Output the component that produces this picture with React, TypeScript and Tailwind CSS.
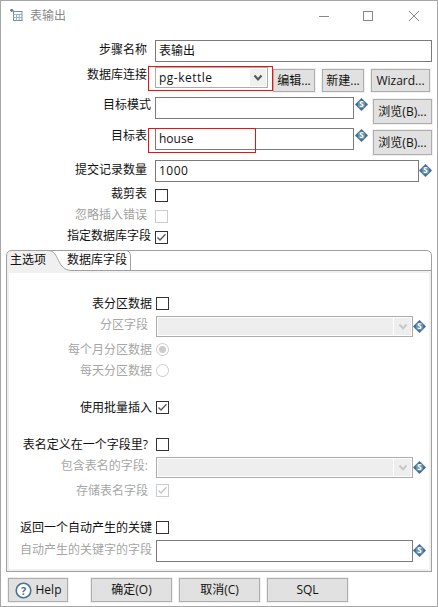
import React from "react";

const FONT = "[font-family:'Open_Sans','Noto_Sans_CJK_SC',sans-serif]";

function VarIcon() {
  return (
    <svg width="13" height="13" viewBox="0 0 13 13" className="shrink-0">
      <path d="M6.5 0.2 L12.8 6.5 L6.5 12.8 L0.2 6.5 Z" fill="#3f6c8e" stroke="#3f6c8e" strokeWidth="0.5" strokeLinejoin="round" />
      <circle cx="6.5" cy="6.5" r="3.7" fill="#6d93ad" />
      <text x="6.5" y="9.2" textAnchor="middle" fontSize="8" fontWeight="700" fill="#fff" fontFamily="'Open Sans',sans-serif">S</text>
    </svg>
  );
}

function Check({ checked, disabled }: { checked?: boolean; disabled?: boolean }) {
  return (
    <div className={`w-[13px] h-[13px] border bg-white shrink-0 flex items-center justify-center ${disabled ? "border-[#cccccc]" : "border-[#333333]"}`}>
      {checked && (
        <svg width="11" height="11" viewBox="0 0 11 11">
          <path d="M1.5 5.5 L4 8 L9.5 2.2" fill="none" stroke={disabled ? "#c4c4c4" : "#555555"} strokeWidth="1.3" />
        </svg>
      )}
    </div>
  );
}

function Radio({ checked }: { checked?: boolean }) {
  return (
    <div className="w-[13px] h-[13px] rounded-full border border-[#cccccc] bg-white flex items-center justify-center shrink-0">
      {checked && <div className="w-[7px] h-[7px] rounded-full bg-[#cccccc]" />}
    </div>
  );
}

function Chevron({ color }: { color: string }) {
  return (
    <svg width="10" height="8" viewBox="0 0 10 8">
      <path d="M1.5 1.5 L5 5.5 L8.5 1.5" fill="none" stroke={color} strokeWidth="2" />
    </svg>
  );
}

function Btn({ children, className }: { children: React.ReactNode; className: string }) {
  return (
    <div className={`border border-[#adadad] bg-[#e1e1e1] text-[12px] text-[#111] flex items-center justify-center shadow-[0_0_0_1px_#f0f0f0] ${className}`}>
      {children}
    </div>
  );
}

function Label({ text, right, h, gray }: { text: string; right: number; h: string; gray?: boolean }) {
  return (
    <div
      className={`${h} flex items-center justify-end pb-[3px] shrink-0 text-[12px] whitespace-nowrap ${gray ? "text-[#a0a0a0]" : "text-[#111]"}`}
      style={{ width: right }}
    >
      {text}
    </div>
  );
}

function TextField({ className, value, spaced }: { className: string; value?: string; spaced?: boolean }) {
  return (
    <div className={`h-[22px] border border-[#7a7a7a] bg-white pl-[3px] flex items-center text-[12px] text-[#111] ${spaced ? "tracking-[0.5px]" : ""} ${className}`}>{value}</div>
  );
}

function DisabledCombo() {
  return (
    <div className="w-[257px] h-[21px] border border-[#acacac] bg-white p-px flex gap-px">
      <div className="flex-1 bg-[#eeeeee]" />
      <div className="w-[17px] bg-[#eeeeee] flex items-center justify-center">
        <Chevron color="#c8c8c8" />
      </div>
    </div>
  );
}

function PanelRow({ label, right, gray, children, mt }: { label: string; right: number; gray?: boolean; children: React.ReactNode; mt: string }) {
  return (
    <div className={`flex items-start ${mt}`}>
      <div className="w-[143px] flex justify-end">
        <div className={`flex items-center h-[13px] text-[12px] whitespace-nowrap ${gray ? "text-[#a6a6a6]" : "text-[#111]"}`} style={{ paddingRight: 152 - right }}>
          {label}
        </div>
      </div>
      <div className="ml-[4px] flex items-start">{children}</div>
    </div>
  );
}

export default function App() {
  return (
    <div className={`w-[438px] h-[607px] border border-[#a6a6a6] bg-white flex flex-col overflow-hidden ${FONT}`}>
      {/* title bar */}
      <div className="h-[29px] shrink-0 flex items-center relative">
        <svg width="13" height="13" viewBox="0 0 13 13" className="ml-[9px] mt-[-1px]">
          <path d="M0 0 L3.5 0 L3.5 3.5 L0 3.5 Z" fill="#5d7f96" transform="rotate(45 1.8 1.8) scale(0.8)" />
          <rect x="3.5" y="2.5" width="8.5" height="9" fill="none" stroke="#6f8fa5" />
          <path d="M3.5 5.5 H12 M3.5 8.5 H12 M6.5 5.5 V11.5 M9.2 5.5 V11.5" stroke="#9db3c1" strokeWidth="1" />
        </svg>
        <div className="ml-[7px] text-[12px] text-[#8a8a8a]">表输出</div>
        <div className="ml-auto flex items-center">
          <div className="w-[10px] h-px bg-[#888] mt-[1px] mr-[34px]" />
          <div className="w-[10px] h-[10px] border border-[#888] mt-[1px] mr-[36px]" />
          <svg width="10" height="10" viewBox="0 0 10 10" className="mr-[18px] mt-[1px]">
            <path d="M0 0 L10 10 M10 0 L0 10" stroke="#888" strokeWidth="1" />
          </svg>
        </div>
      </div>

      {/* form */}
      <div className="flex items-start mt-[10px]">
        <Label text="步骤名称" right={146} h="h-[22px]" />
        <TextField className="ml-[8px] w-[277px]" value="表输出" />
      </div>

      <div className="flex items-start mt-[4px] relative">
        <Label text="数据库连接" right={146} h="h-[21px]" />
        <div className="ml-[8px] mt-px w-[113px] h-[21px] border border-[#acacac] bg-white pl-[3px] flex items-center justify-between text-[12px] text-[#111] pr-px">
          <span className="tracking-[0.5px]">pg-kettle</span>
          <div className="w-[16px] h-[17px] bg-[#f0f0f0] flex items-center justify-center">
            <Chevron color="#555555" />
          </div>
        </div>
        <Btn className="ml-[5px] mt-[3px] w-[42px] h-[23px]">编辑...</Btn>
        <Btn className="ml-[7px] mt-[3px] w-[42px] h-[23px]">新建...</Btn>
        <Btn className="ml-[7px] mt-[3px] w-[59px] h-[23px]">Wizard...</Btn>
        <div className="absolute left-[147px] top-0 w-[125px] h-[25px] border border-[#ee1111] pointer-events-none" />
      </div>

      <div className="flex items-start mt-[5px]">
        <Label text="目标模式" right={150} h="h-[18px]" />
        <TextField className="ml-[4px] w-[199px]" />
        <div className="mt-[1px] ml-px"><VarIcon /></div>
        <Btn className="ml-[5px] mt-[2px] w-[59px] h-[25px]">浏览(B)...</Btn>
      </div>

      <div className="flex items-start mt-[4px] relative">
        <Label text="目标表" right={146} h="h-[18px]" />
        <TextField className="ml-[8px] w-[199px]" value="house" />
        <div className="mt-[1px] ml-px"><VarIcon /></div>
        <Btn className="ml-[5px] mt-[2px] w-[59px] h-[25px]">浏览(B)...</Btn>
        <div className="absolute left-[147px] top-0 w-[108px] h-[25px] border border-[#ee1111] pointer-events-none" />
      </div>

      <div className="flex items-start mt-[5px]">
        <Label text="提交记录数量" right={146} h="h-[22px]" />
        <TextField className="ml-[8px] w-[264px]" value="1000" spaced />
        <div className="mt-[4px]"><VarIcon /></div>
      </div>

      <div className="flex items-start mt-[7px]">
        <Label text="裁剪表" right={146} h="h-[13px]" />
        <div className="ml-[8px]"><Check /></div>
      </div>
      <div className="flex items-start mt-[8px]">
        <Label text="忽略插入错误" right={146} h="h-[13px]" gray />
        <div className="ml-[8px]"><Check disabled /></div>
      </div>
      <div className="flex items-start mt-[8px]">
        <Label text="指定数据库字段" right={150} h="h-[13px]" />
        <div className="ml-[4px]"><Check checked /></div>
      </div>

      {/* tabs */}
      <div className="mt-[6px] ml-[5px] w-[426px] h-[322px] flex flex-col">
        <div className="h-[21px] shrink-0 relative flex items-center text-[12px] text-[#111]">
          <svg width="426" height="21" viewBox="0 0 426 21" className="absolute left-0 top-0">
            <path d="M0.5 21 V6 Q0.5 0.5 6 0.5 H42 C54 0.5 50 20.5 66 20.5 V21 H0.5 Z" fill="#f0f0f0" />
            <path d="M0.5 21 V6 Q0.5 0.5 6 0.5 H420 Q425.5 0.5 425.5 6 V21" fill="none" stroke="#a0a0a0" />
            <path d="M42 0.5 C54 0.5 50 20.5 66 20.5 H425.5" fill="none" stroke="#a0a0a0" />
            <path d="M119 0.5 Q124.5 0.5 124.5 6 V20.5" fill="none" stroke="#a0a0a0" />
          </svg>
          <span className="relative ml-[4px] pb-px">主选项</span>
          <span className="relative ml-[21px] pb-px">数据库字段</span>
        </div>
        <div className="flex-1 border-x border-b border-[#a0a0a0] bg-white flex flex-col">
          <div className="flex-1 border-t-2 border-x-2 border-b-2 border-[#f0f0f0] pt-[24px]">
            <PanelRow label="表分区数据" right={152} mt="mt-0"><Check /></PanelRow>

            <div className="flex items-start mt-[6px]">
              <div className="w-[139px] h-[21px] pb-[3px] flex items-center justify-end text-[12px] text-[#a6a6a6]">分区字段</div>
              <div className="ml-[8px]"><DisabledCombo /></div>
              <div className="mt-[4px]"><VarIcon /></div>
            </div>

            <PanelRow label="每个月分区数据" right={152} gray mt="mt-[6px]"><Radio checked /></PanelRow>
            <PanelRow label="每天分区数据" right={152} gray mt="mt-[8px]"><Radio /></PanelRow>

            <PanelRow label="使用批量插入" right={152} mt="mt-[24px]"><Check checked /></PanelRow>
            <PanelRow label="表名定义在一个字段里?" right={148} mt="mt-[24px]"><Check /></PanelRow>

            <div className="flex items-start mt-[6px]">
              <div className="w-[139px] h-[21px] pb-[3px] flex items-center justify-end text-[12px] text-[#a6a6a6] whitespace-nowrap">包含表名的字段:</div>
              <div className="ml-[8px]"><DisabledCombo /></div>
              <div className="mt-[4px]"><VarIcon /></div>
            </div>

            <PanelRow label="存储表名字段" right={148} gray mt="mt-[6px]"><Check checked disabled /></PanelRow>
            <PanelRow label="返回一个自动产生的关键" right={152} mt="mt-[24px]"><Check /></PanelRow>

            <div className="flex items-start mt-[6px]">
              <div className="w-[143px] h-[22px] pb-[3px] flex items-center justify-end text-[12px] text-[#a6a6a6] whitespace-nowrap">自动产生的关键字的字段</div>
              <TextField className="ml-[4px] w-[257px]" />
              <div className="mt-[4px]"><VarIcon /></div>
            </div>
          </div>
        </div>
      </div>

      {/* footer */}
      <div className="flex items-start mt-[6px] ml-[7px]">
        <Btn className="w-[60px] h-[24px] gap-[4px]">
          <svg width="17" height="17" viewBox="0 0 17 17">
            <circle cx="8.5" cy="8.5" r="7.3" fill="#fff" stroke="#4a7391" strokeWidth="1.6" />
            <text x="8.5" y="12.5" textAnchor="middle" fontSize="11" fontWeight="700" fill="#4a7391" fontFamily="'Open Sans',sans-serif">?</text>
          </svg>
          Help
        </Btn>
        <Btn className="ml-[23px] w-[81px] h-[24px]">确定(O)</Btn>
        <Btn className="ml-[7px] w-[81px] h-[24px]">取消(C)</Btn>
        <Btn className="ml-[7px] w-[81px] h-[24px]">SQL</Btn>
      </div>
    </div>
  );
}
